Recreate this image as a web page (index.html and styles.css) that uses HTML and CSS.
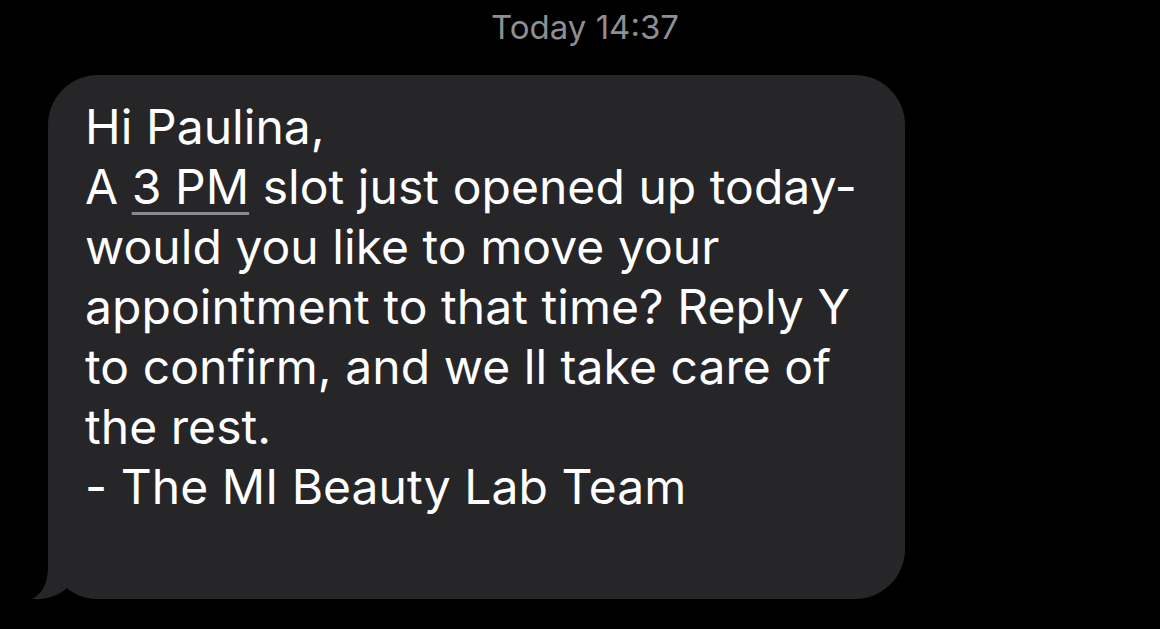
FILE: index.html
```html
<!DOCTYPE html>
<html>
<head>
<meta charset="utf-8">
<link rel="stylesheet" href="styles.css">
</head>
<body>
<div class="thread">
  <div class="stamp">Today 14:37</div>
  <div class="row">
    <div class="bubble">
      <div class="msg">Hi Paulina,<br>A <span class="link">3 PM</span> slot just opened up today-<br>would you like to move your<br>appointment to that time? Reply Y<br>to confirm, and we ll take care of<br>the rest.<br>- The MI Beauty Lab Team</div>
      <svg class="tail" width="80" height="60" viewBox="30 540 80 60" xmlns="http://www.w3.org/2000/svg">
        <path d="M48 540 L48 566 C48 584 42 594 32 599 C46 600 58 596 67 588 C76 596 88 599 102 599 L110 599 L110 540 Z" fill="#262629"/>
      </svg>
    </div>
  </div>
</div>
</body>
</html>
```

FILE: styles.css
```css
html, body {
  margin: 0;
  padding: 0;
  background: #000;
}
body {
  width: 1160px;
  height: 629px;
  overflow: hidden;
  font-family: Inter, "Noto Sans", sans-serif;
}
.thread {
  display: flex;
  flex-direction: column;
}
.stamp {
  height: 75px;
  box-sizing: border-box;
  padding-top: 8px;
  text-align: center;
  color: #8e8e93;
  font-size: 33px;
  line-height: 38px;
  padding-left: 10px;
}
.row {
  display: flex;
  padding-left: 48px;
}
.bubble {
  position: relative;
  width: 857px;
  height: 524px;
  box-sizing: border-box;
  background: #262629;
  border-radius: 50px;
  padding: 22px 20px 0 37px;
}
.msg {
  color: #fff;
  font-size: 48px;
  line-height: 60px;
  letter-spacing: 0.05px;
}
.link {
  text-decoration: underline;
  text-decoration-color: #8a8a8e;
  text-decoration-thickness: 2.5px;
  text-underline-offset: 8px;
}
.tail {
  position: absolute;
  left: -18px;
  top: 465px;
}
```
